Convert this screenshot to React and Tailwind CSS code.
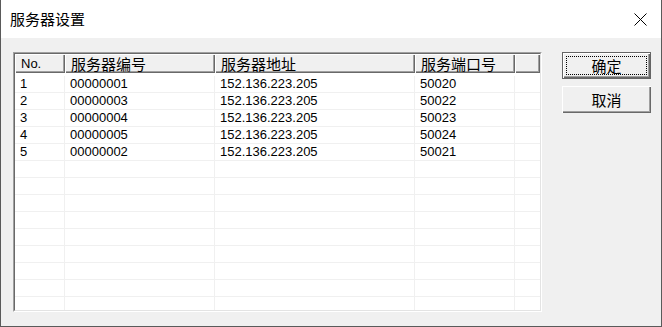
import React from "react";

const cols = [50, 150, 200, 100];
const data = [
  ["1", "00000001", "152.136.223.205", "50020"],
  ["2", "00000003", "152.136.223.205", "50022"],
  ["3", "00000004", "152.136.223.205", "50023"],
  ["4", "00000005", "152.136.223.205", "50024"],
  ["5", "00000002", "152.136.223.205", "50021"],
];

const cjk = { fontFamily: '"Noto Sans CJK SC", "Noto Sans", sans-serif' };
const lat = { fontFamily: '"Liberation Sans", "Noto Sans CJK SC", sans-serif' };

function Row({ cells, first }) {
  return (
    <div className={`flex border-b border-[#f0f0f0] ${first ? "h-[20px] pt-[3px]" : "h-[17px]"}`}>
      {cols.map((w, i) => (
        <div
          key={i}
          className="shrink-0 border-r border-[#f0f0f0] pl-[5px] text-[13px] leading-[16px] text-black whitespace-nowrap overflow-hidden"
          style={{ width: w, ...lat }}
        >
          {cells ? cells[i] : ""}
        </div>
      ))}
      <div className="flex-1" />
    </div>
  );
}

const headShadow =
  "shadow-[inset_1px_1px_0_#ffffff,inset_-1px_-1px_0_#696969,inset_-2px_-2px_0_#a0a0a0]";

export default function App() {
  const headers = ["No.", "服务器编号", "服务器地址", "服务端口号"];
  const rows = [];
  for (let i = 0; i < 15; i++) rows.push(data[i] || null);
  return (
    <div className="w-[662px] h-[327px] flex flex-col border-l border-r border-b border-[#5a5a5a] bg-[#f0f0f0] overflow-hidden">
      <div className="h-[38px] bg-white flex items-center justify-between pl-[9px] pr-[14px] shrink-0">
        <span className="text-[15px] text-black" style={cjk}>服务器设置</span>
        <svg width="13" height="13" viewBox="0 0 13 13">
          <path d="M0.5 0.5 L12.5 12.5 M12.5 0.5 L0.5 12.5" stroke="#000" strokeWidth="1" fill="none" />
        </svg>
      </div>
      <div className="flex-1 flex pt-[14px] pl-[12px]">
        <div className="w-[529px] h-[260px] flex border-t border-l border-[#a0a0a0] border-b-white border-r-white border-b border-r">
          <div className="flex-1 flex flex-col bg-white border-t border-l border-[#696969] border-b-[#e3e3e3] border-r-[#e3e3e3] border-b border-r overflow-hidden">
            <div className="h-[19px] flex shrink-0">
              {headers.map((h, i) => (
                <div
                  key={i}
                  className={`shrink-0 bg-[#f0f0f0] ${headShadow} pl-[6px] text-black whitespace-nowrap flex items-center ${i === 0 ? "text-[13px]" : "text-[15px]"}`}
                  style={{ width: cols[i], ...(i === 0 ? lat : cjk) }}
                >
                  <span className="leading-[17px]">{h}</span>
                </div>
              ))}
              <div className={`flex-1 bg-[#f0f0f0] ${headShadow}`} />
            </div>
            <div className="flex-1 overflow-hidden">
              {rows.map((r, i) => (
                <Row key={i} cells={r} first={i === 0} />
              ))}
            </div>
          </div>
        </div>
        <div className="ml-[20px] flex flex-col gap-[7px]">
          <button className="relative w-[89px] h-[27px] bg-[#f0f0f0] border border-[#646464] shadow-[inset_1px_1px_0_#ffffff,inset_-1px_-1px_0_#696969,inset_-2px_-2px_0_#a0a0a0] flex items-center justify-center text-[15px] text-black" style={cjk}>
            <span className="absolute inset-[3px] border border-dotted border-black" />
            <span className="leading-[18px]">确定</span>
          </button>
          <button className="w-[89px] h-[27px] bg-[#f0f0f0] shadow-[inset_1px_1px_0_#ffffff,inset_-1px_-1px_0_#696969,inset_-2px_-2px_0_#a0a0a0] flex items-center justify-center text-[15px] text-black" style={cjk}>
            <span className="leading-[18px]">取消</span>
          </button>
        </div>
      </div>
    </div>
  );
}
